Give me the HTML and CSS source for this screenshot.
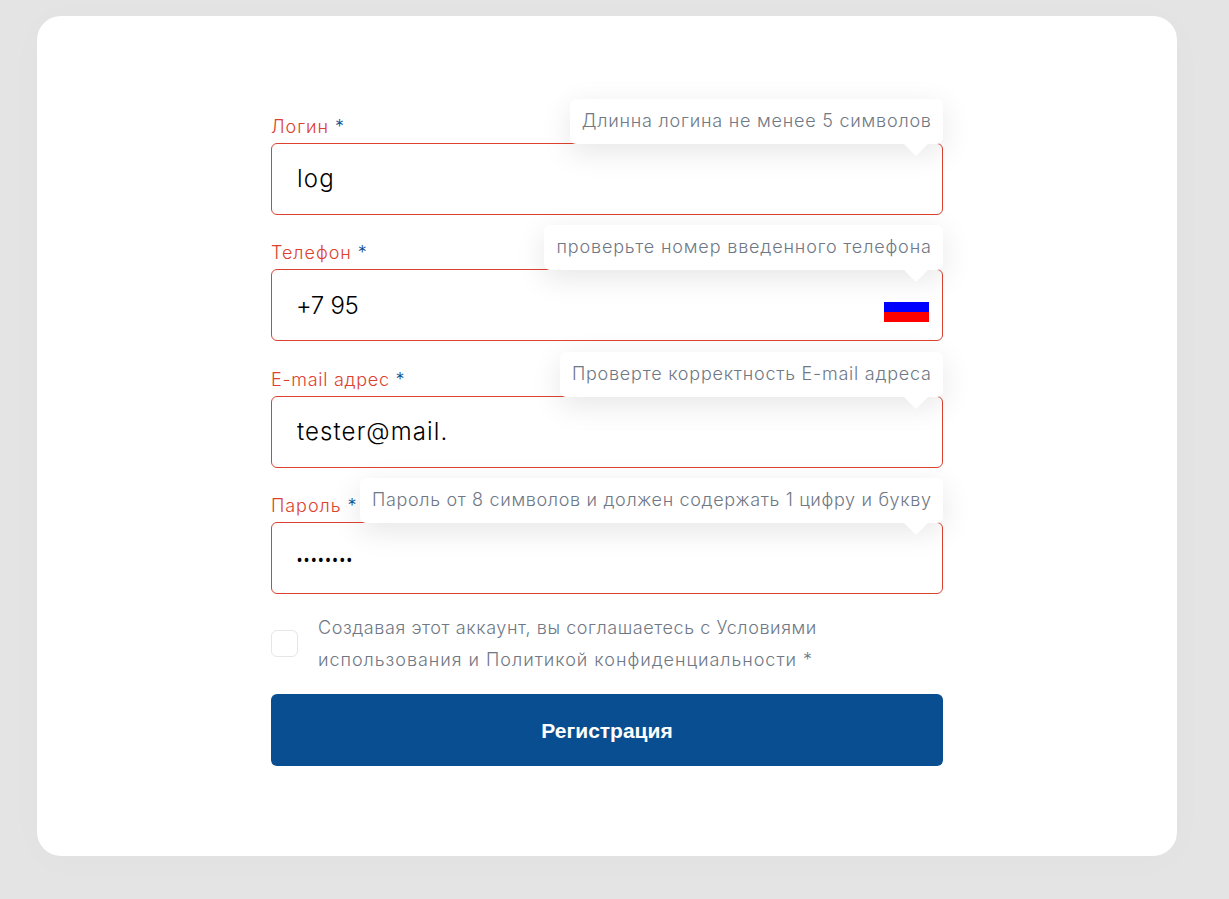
FILE: index.html
```html
<!DOCTYPE html>
<html lang="ru">
<head>
<meta charset="utf-8">
<title>Регистрация</title>
<link rel="stylesheet" href="styles.css">
</head>
<body>
<main class="card">
<form class="form">
  <div class="field">
    <label class="label label-login" for="login">Логин <span class="star">*</span></label>
    <input class="input input-login" id="login" type="text" value="log">
    <div class="tip tip-login">Длинна логина не менее 5 символов</div>
  </div>
  <div class="field">
    <label class="label label-phone" for="phone">Телефон <span class="star">*</span></label>
    <input class="input input-phone" id="phone" type="text" value="+7 95">
    <svg class="flag" viewBox="0 0 45 30"><path fill="#fff" d="M0 0h45v10H0z"/><path fill="#00f" d="M0 10h45v10H0z"/><path fill="#f00" d="M0 20h45v10H0z"/></svg>
    <div class="tip tip-phone">проверьте номер введенного телефона</div>
  </div>
  <div class="field">
    <label class="label label-mail" for="mail">E-mail адрес <span class="star">*</span></label>
    <input class="input input-mail" id="mail" type="text" value="tester@mail.">
    <div class="tip tip-mail">Проверте корректность E-mail адреса</div>
  </div>
  <div class="field">
    <label class="label label-pass" for="pass">Пароль <span class="star">*</span></label>
    <input class="input input-pass" id="pass" type="text" value="••••••••">
    <div class="tip tip-pass">Пароль от 8 символов и должен содержать 1 цифру и букву</div>
  </div>
  <label class="agree">
    <span class="box"></span>
    <span class="terms"><span class="line1">Создавая этот аккаунт, вы соглашаетесь с Условиями</span><br><span class="line2">использования и Политикой конфиденциальности *</span></span>
  </label>
  <button class="submit" type="button">Регистрация</button>
</form>
</main>
</body>
</html>
```
FILE: styles.css
```css
* { box-sizing: border-box; }
body {
  margin: 0;
  padding: 16px 52px 43px 37px;
  height: 899px;
  overflow: hidden;
  background: #e4e4e4;
  font-family: Inter, "Open Sans", sans-serif;
  font-weight: 300;
}
.card {
  height: 840px;
  padding: 94px 234px 0;
  border-radius: 24px;
  background: #fff;
  box-shadow: 0 4px 40px rgba(0, 0, 0, .02);
}
.field {
  position: relative;
  display: flex;
  flex-direction: column;
  height: 126.4px;
}
.label {
  height: 33px;
  line-height: 33px;
  font-size: 18px;
  letter-spacing: .95px;
  color: #dc4230;
  white-space: pre;
}
.label-mail { letter-spacing: .72px; }
.star { color: #084e90; }
.input {
  width: 100%;
  height: 72px;
  padding: 0 24px 0 25px;
  border: 1px solid #dc4230;
  border-radius: 6px;
  outline: 0;
  background: #fff;
  color: #000;
  font: inherit;
  font-size: 24px;
}
.input-login {
  padding-bottom: 2px;
  letter-spacing: 1.2px;
}
.input-phone {
  padding-left: 24px;
  letter-spacing: -.3px;
}
.input-mail { letter-spacing: 1.1px; }
.input-pass {
  padding: 2px 0 0 23px;
  font-family: "Open Sans", sans-serif;
  letter-spacing: -1.9px;
}
.tip {
  position: absolute;
  top: -11px;
  right: 0;
  height: 45px;
  padding: 0 11.3px 0 12px;
  border-radius: 6px;
  background: #fff;
  color: #6f7885;
  font-size: 18px;
  line-height: 43px;
  white-space: nowrap;
  box-shadow: 0 8px 30px rgba(0, 0, 0, .1);
}
.tip-login { letter-spacing: .77px; }
.tip-phone { letter-spacing: .84px; }
.tip-mail { letter-spacing: .76px; }
.tip-pass { letter-spacing: .66px; }
.tip::after {
  content: "";
  position: absolute;
  top: 45px;
  right: 15px;
  border: 12px solid transparent;
  border-top-color: #fff;
  border-bottom: 0;
}
.flag {
  position: absolute;
  top: 55.6px;
  right: 14.5px;
  width: 45px;
  height: 30px;
}
.agree {
  display: flex;
  align-items: center;
  height: 64px;
  margin-top: -3.6px;
  gap: 20px;
}
.box {
  width: 27px;
  height: 27px;
  border: 1px solid #e6e6ea;
  border-radius: 6px;
}
.terms {
  color: #6f7885;
  font-size: 18px;
  line-height: 32px;
  white-space: nowrap;
}
.line1 { letter-spacing: .58px; }
.line2 { letter-spacing: .97px; }
.submit {
  display: block;
  width: 100%;
  height: 72px;
  margin-top: 18px;
  padding: 2px 0 0;
  border: 0;
  border-radius: 6px;
  background: #084e90;
  color: #fff;
  font: bold 21px "Liberation Sans", Arial, sans-serif;
}
```
